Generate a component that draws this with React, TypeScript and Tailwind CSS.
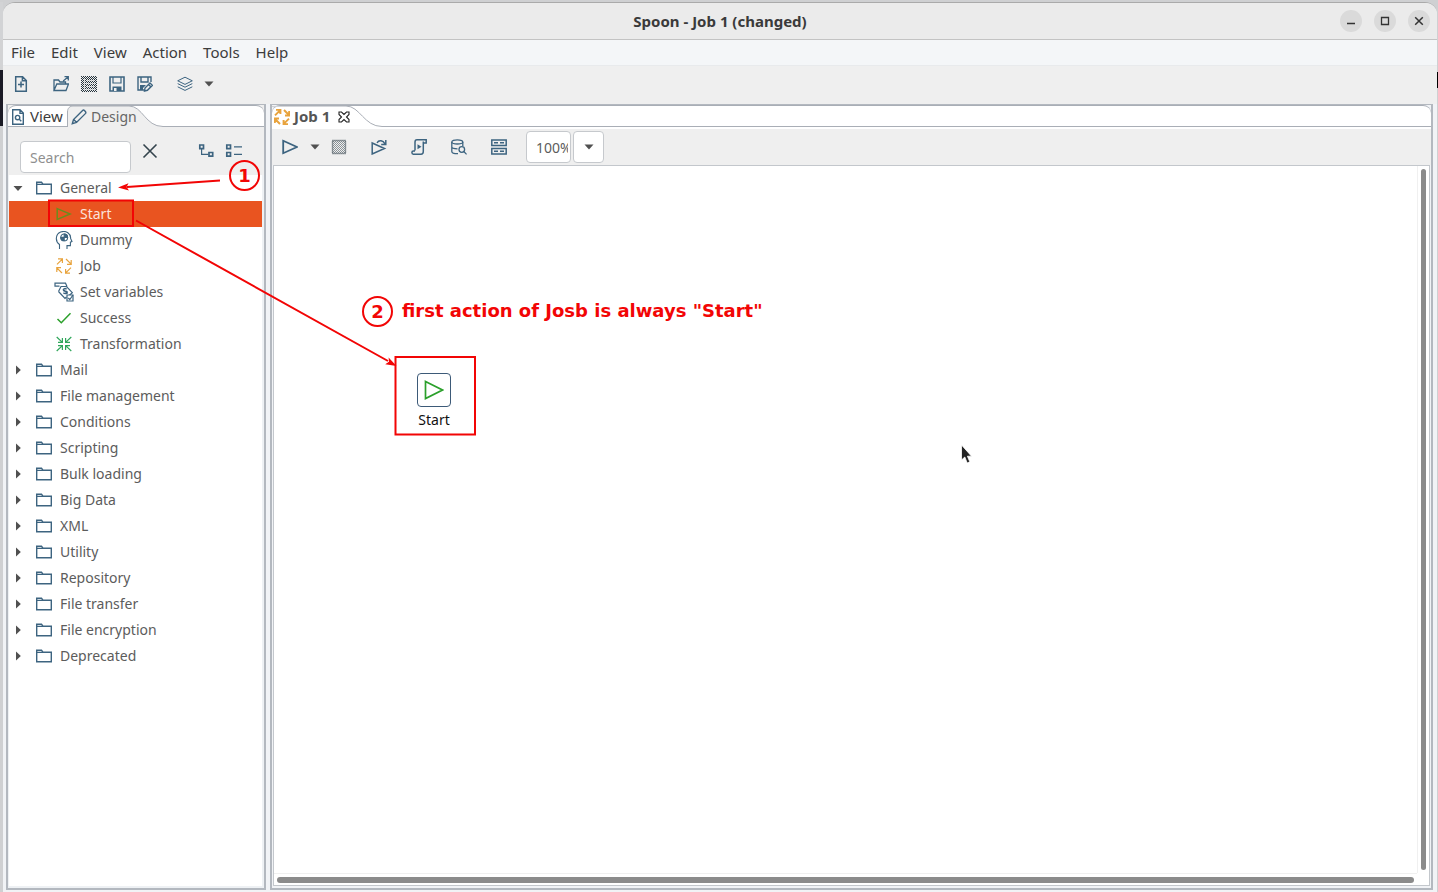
import React from "react";

const BLUE = "#3d6480";
const GREEN = "#2ba02b";
const ORANGE = "#e8a33d";

type IconProps = { children: React.ReactNode; stroke?: string; width?: number; box?: number };

function Icon({ children, stroke = BLUE, width = 1.3, box = 16 }: IconProps) {
  return (
    <svg
      className="shrink-0"
      width={box}
      height={box}
      viewBox={`0 0 ${box} ${box}`}
      fill="none"
      stroke={stroke}
      strokeWidth={width}
      aria-hidden="true"
    >
      {children}
    </svg>
  );
}

const FileNewIcon = () => (
  <Icon width={1.5}>
    <path d="M2.7 .8H9.6L13.3 4.5V15.2H2.7ZM9.4 .8V4.8H13.3M8 5.5V11.5M5 8.5H11" />
  </Icon>
);

const OpenIcon = () => (
  <Icon>
    <path d="M1 14.5V4H5.5L7 6H12.5V8M1 14.5L3.8 8H15.5L13 14.5ZM10.2 5L15 1M11.5 .7H15.3V4.5" />
  </Icon>
);

function HatchDefs({ id, color }: { id: string; color: string }) {
  return (
    <defs>
      <pattern id={id} width="2" height="2" patternUnits="userSpaceOnUse">
        <path d="M0 0H1V1H0ZM1 1H2V2H1Z" fill={color} stroke="none" />
      </pattern>
    </defs>
  );
}

const RepositoryIcon = () => (
  <Icon>
    <HatchDefs id="hatch-list" color="#26343d" />
    <path d="M0 0H16V16H0Z" fill="url(#hatch-list)" stroke="none" />
    <path d="M3.5 2V14M5 4.5H14M5 7.5H14M5 10.5H14M5 13.5H14" stroke="#efefef" strokeWidth="1" strokeOpacity=".75" />
  </Icon>
);

const SaveIcon = () => (
  <Icon width={1.6}>
    <path d="M1 1H15V15H1Z" />
    <path d="M4 1V7H12V1" strokeWidth="1.2" />
    <path d="M3.5 10.5H12.5V15H3.5Z" fill={BLUE} stroke="none" />
    <path d="M5 12H7.5V15H5Z" fill="#efefef" stroke="none" />
  </Icon>
);

const SaveAsIcon = () => (
  <Icon width={1.4}>
    <path d="M7 14H1V1H14V6M4 1V6H11V1" />
    <path d="M3 9H9L6 12V14H3Z" fill={BLUE} stroke="none" />
    <path d="M7.5 15L8 12L13 7L15.4 9.3L10.4 14.3ZM11.5 8.5L14 11" />
  </Icon>
);

const LayersIcon = () => (
  <Icon width={1}>
    <path d="M8 1.2L15.3 4.8L8 8.4L.7 4.8ZM.7 7.6L8 11.2L15.3 7.6M.7 10.8L8 14.4L15.3 10.8" />
  </Icon>
);

const Caret = () => (
  <svg className="shrink-0" width="10" height="6" viewBox="0 0 10 6" aria-hidden="true">
    <path d="M.5 .5H9.5L5 5.5Z" fill="#505050" />
  </svg>
);

const ViewIcon = () => (
  <Icon width={1.4}>
    <path d="M2.7 .8H10L13.3 4.1V15.2H2.7ZM10 1V4.4H13M9 10L11.3 12.3" />
    <circle cx="7.6" cy="8.6" r="2.2" />
  </Icon>
);

const PencilIcon = () => (
  <Icon width={1.4}>
    <path d="M1.3 14.7L2.5 10.5L11.6 1.4C12.8 .3 15.6 3.1 14.6 4.4L5.5 13.5ZM2.7 10.5L5.5 13.3" />
  </Icon>
);

const ExpandAllIcon = () => (
  <Icon width={1.7}>
    <path d="M1.8 2H5.5V5.7H1.8ZM11 9.5H14.7V13.2H11Z" />
    <path d="M3.6 6V11.4H10.5" strokeWidth="1.2" />
  </Icon>
);

const CollapseAllIcon = () => (
  <Icon width={1.7} box={18}>
    <path d="M1.8 3H5.5V6.7H1.8ZM1.8 10.5H5.5V14.2H1.8Z" />
    <path d="M9 4.8H17M9 12.4H17" strokeWidth="1.2" />
  </Icon>
);

const ClearIcon = () => (
  <Icon stroke="#34444d" width={1.6}>
    <path d="M1.5 1.5L14.5 14.5M14.5 1.5L1.5 14.5" />
  </Icon>
);

const FolderIcon = () => (
  <Icon width={1.4}>
    <path d="M.7 13.8V2.2H5.5L7 4.2H15.3V13.8ZM.7 4.4H7" />
  </Icon>
);

const StartIcon = () => (
  <Icon stroke="#6b8c1e" width={1.5}>
    <path d="M1.2 2.6L14.2 8L1.2 13.4Z" />
  </Icon>
);

const DummyIcon = () => (
  <Icon width={1.1} box={18}>
    <path d="M4.5 18V13.5C0 10.5 .3 3.2 5.6 1C11.2 -1 16 2.8 15.6 7.4L17 10.5L15.4 11.2V14.6H12V18" />
    <circle cx="9.2" cy="6.4" r="3.4" />
    <path d="M9.2 6.4V3A3.4 3.4 0 0 1 12.6 6.4ZM9.2 6.4V9.8A3.4 3.4 0 0 1 5.8 6.4Z" fill={BLUE} />
  </Icon>
);

const ArrowsOut = ({ width = 1.2 }: { width?: number }) => (
  <Icon stroke={ORANGE} width={width}>
    <path d="M1 6.4L6 1.4M2 .8H6.400V5M10 1L15.200 6.200M15.200 2V6.400H11M15 9.600L10 14.600M14 15.200H9.600V11M6 15L.8 9.800M.8 14V9.600H5" />
  </Icon>
);

const ArrowsIn = () => (
  <Icon stroke="#2fa65a" width={1.2}>
    <path d="M.7 1L6.4 6.4M2 6.4H6.4V2M15.3 1L9.6 6.4M14 6.4H9.6V2M.7 15L6.4 9.6M2 9.6H6.4V14M15.3 15L9.6 9.6M14 9.6H9.6V14" />
  </Icon>
);

const VariablesIcon = () => (
  <Icon width={1.2} box={20}>
    <path d="M13 4.5L11.5 1.2H1V4.2H5.5M4.5 9.5L7 4.5H12.5L18.3 10.6L14 14.5M4.5 9.5L11 16.3L12.5 15" />
    <path d="M12.6 7.3C11 5.7 8.6 7 9.6 8.6C10.5 9.8 12.4 8.6 13.2 9.9C13.8 11.3 11 12.6 9.4 10.8M9 7L13.5 11.8" strokeWidth="1.3" />
    <path d="M13 13H19V19H13Z" fill="#fff" />
    <path d="M14.3 16L15.8 17.5L19 13" />
  </Icon>
);

const CheckIcon = () => (
  <Icon stroke={GREEN} width={1.5}>
    <path d="M1.5 9L5.3 12.8L14.5 3.2" />
  </Icon>
);

const RunIcon = () => (
  <Icon width={1.8}>
    <path d="M1.2 1.8L15 8L1.2 14.2Z" />
  </Icon>
);

const StopIcon = () => (
  <Icon stroke="#35434c" width={1}>
    <HatchDefs id="hatch-stop" color="#8b9398" />
    <path d="M1.500 1.500H14.500V14.500H1.500Z" fill="url(#hatch-stop)" strokeWidth="1.400" strokeDasharray="1 1" />
  </Icon>
);

const ReplayIcon = () => (
  <Icon width={1.5}>
    <path d="M1.2 4L13.5 9.5L1.2 15ZM6 3.8C8 .6 12 1.3 14 4.8M14.8 1V5.5H10.2" />
  </Icon>
);

const ScriptIcon = () => (
  <Icon width={1.5}>
    <path d="M4 11.5V3C4 1.5 4.8 .8 6 .8H15.2V4H12.3V12.5C12.3 14.3 11.5 15.2 10 15.2H2.4C.4 15.2 .4 12 2.4 12H4M12.3 4V2.5" />
    <path d="M6.5 5.3L10.5 7.8L6.5 10.3Z" fill={BLUE} stroke="none" />
  </Icon>
);

const DatabaseIcon = () => (
  <Icon width={1.3}>
    <ellipse cx="6.300" cy="2.900" rx="5.500" ry="2.100" />
    <path d="M.8 2.900V12.500C.8 14 3.500 14.700 7 14.700M11.800 2.900V7M.8 7.700C.8 9 3.500 9.800 6.500 9.800" />
    <circle cx="10.800" cy="10.500" r="2.800" />
    <path d="M12.800 12.500L15.600 15.400" />
  </Icon>
);

const RowsIcon = () => (
  <Icon width={1.5}>
    <path d="M.8 1H15.2V6.5H.8ZM.8 9.5H15.2V15H.8Z" />
    <path d="M3 3.8H7M9 3.8H13M3 12.3H7M9 12.3H13" />
  </Icon>
);

const TabCloseIcon = () => (
  <svg width="12" height="12" viewBox="0 0 12 12" fill="#fff" stroke="#222" strokeWidth="1.1" aria-hidden="true">
    <path d="M1 1H3.5L6 3.5L8.500 1H11V3.500L8.500 6L11 8.500V11H8.500L6 8.500L3.500 11H1V8.500L3.500 6L1 3.500Z" />
  </svg>
);

function ToolButton({ label, className = "", children }: { label: string; className?: string; children: React.ReactNode }) {
  return (
    <button type="button" aria-label={label} className={`flex shrink-0 items-center justify-center ${className}`}>
      {children}
    </button>
  );
}

function TitleBar() {
  return (
    <header className="flex h-[37px] shrink-0 items-center border-b border-[#c3c3c3] bg-[#ebebeb]">
      <span className="w-[100px]" />
      <h1 className="flex-1 text-center text-[15px] font-bold text-[#3a3a3a]">Spoon - Job 1 (changed)</h1>
      <div className="flex w-[100px] gap-3 pl-[3px]">
        <ToolButton label="Minimize" className="size-[22px] rounded-full bg-[#dadada]">
          <Icon stroke="#333"><path d="M4 10.5H12" /></Icon>
        </ToolButton>
        <ToolButton label="Maximize" className="size-[22px] rounded-full bg-[#dadada]">
          <Icon stroke="#333"><path d="M4.5 4.5H11.5V11.5H4.5Z" /></Icon>
        </ToolButton>
        <ToolButton label="Close" className="size-[22px] rounded-full bg-[#dadada]">
          <Icon stroke="#333" width={1.5}><path d="M4.2 4.2L11.8 11.8M11.8 4.2L4.2 11.8" /></Icon>
        </ToolButton>
      </div>
    </header>
  );
}

function MenuBar() {
  return (
    <nav className="flex h-[26px] shrink-0 items-center gap-4 border-b border-[#e8eaec] bg-[#f4f6f8] px-2 text-[15px] text-[#3c3c3c]">
      {["File", "Edit", "View", "Action", "Tools", "Help"].map((item) => (
        <button type="button" key={item}>{item}</button>
      ))}
    </nav>
  );
}

function MainToolbar() {
  return (
    <div className="flex h-[38px] shrink-0 items-center bg-[#efefef] pb-[2px] pl-[10px]">
      <ToolButton label="New file"><FileNewIcon /></ToolButton>
      <div className="ml-6 flex gap-3">
        <ToolButton label="Open"><OpenIcon /></ToolButton>
        <ToolButton label="Explore repository"><RepositoryIcon /></ToolButton>
        <ToolButton label="Save"><SaveIcon /></ToolButton>
        <ToolButton label="Save as"><SaveAsIcon /></ToolButton>
      </div>
      <ToolButton label="Perspective" className="ml-6"><LayersIcon /></ToolButton>
      <ToolButton label="Choose perspective" className="ml-[11px]"><Caret /></ToolButton>
    </div>
  );
}

const leaves: { name: string; icon: React.ReactNode }[] = [
  { name: "Start", icon: <StartIcon /> },
  { name: "Dummy", icon: <DummyIcon /> },
  { name: "Job", icon: <ArrowsOut /> },
  { name: "Set variables", icon: <VariablesIcon /> },
  { name: "Success", icon: <CheckIcon /> },
  { name: "Transformation", icon: <ArrowsIn /> },
];

const folders = [
  "Mail", "File management", "Conditions", "Scripting", "Bulk loading", "Big Data",
  "XML", "Utility", "Repository", "File transfer", "File encryption", "Deprecated",
];

function FolderRow({ name, open = false }: { name: string; open?: boolean }) {
  return (
    <button type="button" aria-expanded={open} className="flex h-[26px] w-full items-center pl-1">
      <svg width="10" height="10" viewBox="0 0 10 10" fill="#505050" aria-hidden="true">
        <path d={open ? "M.5 3H9.5L5 8Z" : "M3 .5V9.5L7.8 5Z"} />
      </svg>
      <span className="ml-[13px] mr-2"><FolderIcon /></span>
      {name}
    </button>
  );
}

function DesignTree() {
  return (
    <ul className="flex-1 bg-white text-sm text-[#5c5c5c]">
      <li>
        <FolderRow name="General" open />
        <ul>
          {leaves.map(({ name, icon }) => (
            <li key={name}>
              <button
                type="button"
                className={
                  name === "Start"
                    ? "flex h-[26px] w-full items-center gap-[5px] bg-[#e95420] pl-11 text-[#fbe3da]"
                    : "flex h-[26px] w-full items-center gap-[5px] pl-11"
                }
              >
                <span className="flex w-[22px] justify-center">{icon}</span>
                {name}
              </button>
            </li>
          ))}
        </ul>
      </li>
      {folders.map((name) => (
        <li key={name}><FolderRow name={name} /></li>
      ))}
    </ul>
  );
}

function DesignPanel() {
  return (
    <section className="flex w-[260px] shrink-0 flex-col border-2 border-t border-[#b3b8bf] bg-[#efefef]">
      <div className="flex h-[22px] shrink-0 rounded-t-lg border-t border-[#a9aeb6] bg-white text-[15px]">
        <button type="button" className="flex w-[59px] items-center gap-1 border-b border-[#a9aeb6] pl-[2px] pt-px text-[#3c3c3c]">
          <ViewIcon />View
        </button>
        <button type="button" className="relative flex w-[96px] items-center text-sm text-[#666]">
          <svg className="absolute inset-0" width="96" height="21" viewBox="0 0 96 21" fill="#efefef" stroke="#a9aeb6" aria-hidden="true">
            <path d="M.5 21V6C.5 2 3 0 6 0H62C76 0 78 20.5 96 20.5L96 22H0" />
          </svg>
          <span className="relative flex items-center gap-1 pl-1"><PencilIcon />Design</span>
        </button>
        <span className="flex-1 border-b border-[#a9aeb6]" />
      </div>
      <div className="flex h-12 shrink-0 pl-3 pt-[14px]">
        <input
          aria-label="Search"
          placeholder="Search"
          className="h-8 w-[111px] rounded-[4px] border border-[#c6c9cd] bg-white px-[9px] text-sm text-[#5c5c5c] outline-none placeholder:text-[#8f8f8f]"
        />
        <div className="flex h-5 flex-1 items-center">
          <ToolButton label="Clear search" className="ml-[11px]"><ClearIcon /></ToolButton>
          <ToolButton label="Expand all" className="ml-10"><ExpandAllIcon /></ToolButton>
          <ToolButton label="Collapse all" className="ml-[11px]"><CollapseAllIcon /></ToolButton>
        </div>
      </div>
      <div className="flex flex-1 flex-col border-b-2 border-l border-r-2 border-[#eef1f4]">
        <DesignTree />
      </div>
    </section>
  );
}

function JobToolbar() {
  return (
    <div className="flex h-9 shrink-0 items-center bg-[#efefef] pl-[10px]">
      <ToolButton label="Run"><RunIcon /></ToolButton>
      <ToolButton label="Run options" className="ml-3"><Caret /></ToolButton>
      <ToolButton label="Stop" className="ml-[11px]"><StopIcon /></ToolButton>
      <div className="ml-6 flex items-center gap-6">
        <ToolButton label="Replay"><ReplayIcon /></ToolButton>
        <ToolButton label="Generate SQL"><ScriptIcon /></ToolButton>
        <ToolButton label="Explore database"><DatabaseIcon /></ToolButton>
        <ToolButton label="Show results"><RowsIcon /></ToolButton>
      </div>
      <input
        aria-label="Zoom"
        defaultValue="100%"
        className="ml-[19px] h-8 w-[45px] rounded-[4px] border border-[#c6c9cd] bg-white pl-[9px] pr-[2px] text-sm text-[#5c5c5c] outline-none"
      />
      <ToolButton label="Zoom levels" className="ml-[2px] h-8 w-[31px] rounded-[4px] border border-[#c6c9cd] bg-white">
        <Caret />
      </ToolButton>
    </div>
  );
}

function JobPanel() {
  return (
    <section className="flex min-w-0 flex-1 flex-col border-2 border-t border-[#b3b8bf] bg-[#f1f3f6]">
      <div className="flex h-[22px] shrink-0 rounded-t-lg border-t border-[#a9aeb6] bg-white">
        <div className="relative flex w-[110px] items-center">
          <svg className="absolute inset-0" width="110" height="21" viewBox="0 0 110 21" fill="#fff" stroke="#a9aeb6" aria-hidden="true">
            <path d="M0 0H74C88 0 92 20.5 110 20.5" />
          </svg>
          <button type="button" className="relative flex items-center gap-1 pl-[2px] text-[15px] font-bold text-[#555]">
            <ArrowsOut width={2} />Job 1
          </button>
          <button type="button" aria-label="Close tab" className="relative ml-2"><TabCloseIcon /></button>
        </div>
        <span className="flex-1 border-b border-[#a9aeb6]" />
      </div>
      <div className="h-[2px] shrink-0 bg-white" />
      <JobToolbar />
      <div className="mx-px mb-[2px] flex flex-1 flex-col border border-[#c3c7cc] bg-white">
        <div className="flex flex-1">
          <main className="relative flex-1">
            <div className="absolute left-[140px] top-[207px] flex w-10 flex-col items-center gap-1">
              <button type="button" aria-label="Start entry" className="flex size-[34px] items-center justify-center rounded-[4px] border border-[#3d5a78] bg-white">
                <Icon stroke={GREEN} width={1.7} box={20}>
                  <path d="M1.5 1.5L18.5 10L1.5 18.5Z" />
                </Icon>
              </button>
              <span className="text-sm leading-[18px] text-[#111]">Start</span>
            </div>
          </main>
          <div className="flex w-[12px] border-l border-[#f0f0f0] px-[3px] pb-[3px] pt-[3px]">
            <div className="w-[6px] rounded-full bg-[#8b8b8b]" />
          </div>
        </div>
        <div className="mr-3 h-3 shrink-0 border-t border-[#f0f0f0] px-[3px] pt-[3px]">
          <div className="h-[6px] rounded-full bg-[#8b8b8b]" />
        </div>
      </div>
    </section>
  );
}

function Annotations() {
  return (
    <div className="pointer-events-none absolute inset-0 font-['DejaVu_Sans',sans-serif] text-[18px] font-bold leading-none text-[#f20505]">
      <svg className="absolute left-0 top-0" width="500" height="450" viewBox="0 0 500 450" fill="none" stroke="#f20505" strokeWidth="2" aria-hidden="true">
        <path d="M220 180.5L127 187M136 220.5L388 361" />
        <path d="M118 187.6L128.5 183.2L126.5 187L129 190.6ZM396.5 366L385.2 364.2L389 361.7L388.6 357.4Z" fill="#f20505" stroke="none" />
        <path d="M49 200.5H133V226H49ZM395.5 357H475V434.5H395.5Z" />
      </svg>
      <span className="absolute left-[229px] top-[160px] flex size-[31px] items-center justify-center rounded-full border-2 border-[#f20505]">1</span>
      <span className="absolute left-[362px] top-[296px] flex size-[31px] items-center justify-center rounded-full border-2 border-[#f20505]">2</span>
      <span className="absolute left-[402px] top-[302px] whitespace-nowrap">first action of Josb is always "Start"</span>
      <svg className="absolute left-[960px] top-[444px]" width="13" height="21" viewBox="0 0 13 21" fill="#222" stroke="#fff" strokeWidth=".8" aria-hidden="true">
        <path d="M1.5 1V16L4.8 13L7.2 19L9.8 17.8L7.4 12.2H11.5Z" />
      </svg>
    </div>
  );
}

export default function App() {
  return (
    <div className="relative flex min-h-screen bg-[#cfd0d2] pt-[2px] font-['Noto_Sans',sans-serif]">
      <div className="flex w-[3px] shrink-0 flex-col">
        <span className="h-[68px] bg-[#d2d3d5]" />
        <span className="h-[56px] bg-[#1b1b26]" />
      </div>
      <div className="flex min-w-0 flex-1 flex-col overflow-hidden rounded-t-xl border-t border-[#aaa] bg-[#f1f3f6]">
        <TitleBar />
        <MenuBar />
        <MainToolbar />
        <div className="flex flex-1 gap-1 pb-[2px] pl-[3px] pr-1">
          <DesignPanel />
          <JobPanel />
        </div>
      </div>
      <div className="flex w-px shrink-0 flex-col pt-[70px]">
        <span className="h-4 bg-black" />
      </div>
      <Annotations />
    </div>
  );
}
